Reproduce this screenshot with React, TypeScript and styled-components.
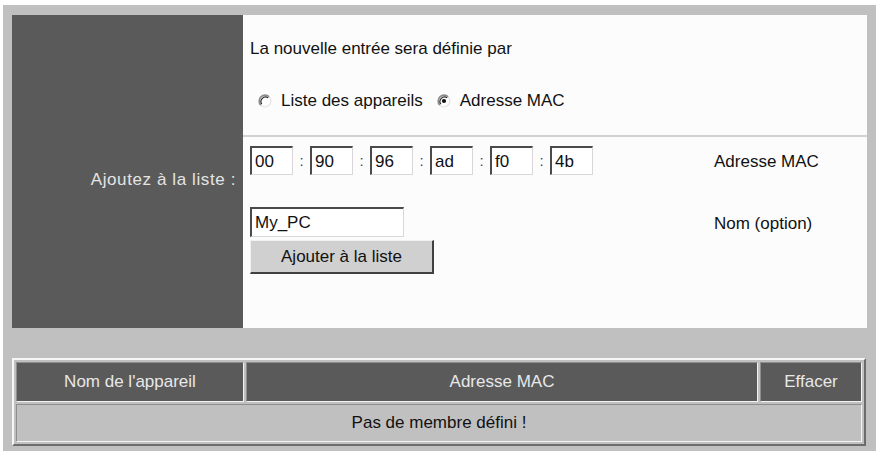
import React from "react";
import styled, { createGlobalStyle } from "styled-components";

const Global = createGlobalStyle`
  html, body { margin: 0; padding: 0; background: #ffffff; }
  body { font-family: "Liberation Sans", Arial, sans-serif; font-size: 17px; color: #111; }
`;

const Frame = styled.div`
  margin: 5px 0 0 3px;
  background: #c0c0c0;
  padding: 10px 9px 5px 9px;
  box-sizing: border-box;
  display: flex;
  flex-direction: column;
`;

const TopPanel = styled.div`
  display: grid;
  grid-template-columns: 231px 1fr;
  height: 313px;
  flex-shrink: 0;
`;

const LabelCell = styled.div`
  background: #5a5a5a;
  color: #e4e4e4;
  display: flex;
  align-items: center;
  justify-content: flex-end;
  padding: 17px 7px 0 0;
  box-sizing: border-box;
  letter-spacing: 0.6px;
  white-space: nowrap;
`;

const ContentCell = styled.div`
  background: #fcfcfc;
  display: flex;
  flex-direction: column;
`;

const ModeSection = styled.div`
  height: 122px;
  box-sizing: border-box;
  padding: 24px 0 0 7px;
  border-bottom: 2px solid #d2d2d2;
`;

const Line = styled.div`
  height: 20px;
  line-height: 20px;
  white-space: nowrap;
`;

const RadioRow = styled.div`
  margin-top: 32px;
  height: 20px;
  display: flex;
  align-items: center;
  padding-left: 8px;
  white-space: nowrap;
`;

const RadioLabel = styled.span<{ $last?: boolean }>`
  margin-left: 9px;
  margin-right: ${(p) => (p.$last ? "0" : "14px")};
`;

const EntrySection = styled.div`
  flex: 1;
  display: flex;
  flex-direction: column;
  padding: 9px 0 0 7px;
`;

const EntryRow = styled.div<{ $top: number; $h: number }>`
  display: grid;
  grid-template-columns: 464px 1fr;
  align-items: center;
  height: ${(p) => p.$h}px;
  margin-top: ${(p) => p.$top}px;
`;

const MacGroup = styled.div`
  display: flex;
  align-items: center;
`;

const Field = styled.input<{ $w: number; $h: number }>`
  width: ${(p) => p.$w}px;
  height: ${(p) => p.$h}px;
  box-sizing: border-box;
  margin: 0;
  padding: 1px 0 0 3px;
  font-family: "Liberation Sans", Arial, sans-serif;
  font-size: 17px;
  color: #111;
  background: #ffffff;
  border-style: solid;
  border-width: 2px 1px 1px 2px;
  border-color: #4a4a4a #d8d8d8 #d8d8d8 #4a4a4a;
  outline: none;
`;

const Colon = styled.span`
  width: 17px;
  text-align: center;
  font-size: 15px;
  color: #444;
`;

const SideLabel = styled.div<{ $shift?: number }>`
  white-space: nowrap;
  position: relative;
  top: ${(p) => p.$shift ?? 0}px;
`;

const Button = styled.button`
  width: 184px;
  height: 34px;
  margin: 0;
  padding: 0;
  font-family: "Liberation Sans", Arial, sans-serif;
  font-size: 17px;
  color: #111;
  background: #d0d0d0;
  border-style: solid;
  border-width: 1px 2px 2px 1px;
  border-color: #f0f0f0 #404040 #404040 #f0f0f0;
`;

const Spacer = styled.div`
  height: 30px;
  flex-shrink: 0;
`;

const ListTable = styled.table`
  width: 854px;
  table-layout: fixed;
  border-collapse: separate;
  border-spacing: 2px;
  border-style: solid;
  border-width: 2px;
  border-color: #f6f6f6 #6c6c6c #6c6c6c #f6f6f6;
  font-size: 17px;
`;

const HeadCell = styled.th`
  height: 40px;
  padding: 0;
  box-sizing: border-box;
  background: #5a5a5a;
  color: #e8e8e8;
  font-weight: normal;
  text-align: center;
  border: 1px solid;
  border-color: #8e8e8e #f2f2f2 #f2f2f2 #8e8e8e;
`;

const BodyCell = styled.td`
  height: 38px;
  padding: 0;
  box-sizing: border-box;
  background: #c0c0c0;
  color: #111;
  text-align: center;
  border: 1px solid;
  border-color: #8e8e8e #f2f2f2 #f2f2f2 #8e8e8e;
`;

const Radio = ({ checked }: { checked?: boolean }) => (
  <svg width="14" height="14" viewBox="0 0 14 14">
    <circle cx="7" cy="7" r="6" fill="#ffffff" />
    <path d="M2.76 11.24 A6 6 0 0 1 11.24 2.76" fill="none" stroke="#8c8c8c" strokeWidth="1.6" />
    <path d="M3.8 10.2 A4.6 4.6 0 0 1 10.2 3.8" fill="none" stroke="#2e2e2e" strokeWidth="1.2" />
    <path d="M11.24 2.76 A6 6 0 0 1 2.76 11.24" fill="none" stroke="#e6e6e6" strokeWidth="1.4" />
    {checked && <circle cx="7" cy="7" r="2.1" fill="#111" />}
  </svg>
);

const mac = ["00", "90", "96", "ad", "f0", "4b"];

export default function App() {
  return (
    <>
      <Global />
      <Frame>
        <TopPanel>
          <LabelCell>Ajoutez à la liste :</LabelCell>
          <ContentCell>
            <ModeSection>
              <Line>La nouvelle entrée sera définie par</Line>
              <RadioRow>
                <Radio />
                <RadioLabel>Liste des appareils</RadioLabel>
                <Radio checked />
                <RadioLabel $last>Adresse MAC</RadioLabel>
              </RadioRow>
            </ModeSection>
            <EntrySection>
              <EntryRow $top={0} $h={29}>
                <MacGroup>
                  {mac.map((v, i) => (
                    <React.Fragment key={i}>
                      {i > 0 && <Colon>:</Colon>}
                      <Field $w={43} $h={29} defaultValue={v} />
                    </React.Fragment>
                  ))}
                </MacGroup>
                <SideLabel $shift={1}>Adresse MAC</SideLabel>
              </EntryRow>
              <EntryRow $top={32} $h={30}>
                <div>
                  <Field $w={154} $h={30} defaultValue="My_PC" />
                </div>
                <SideLabel $shift={2}>Nom (option)</SideLabel>
              </EntryRow>
              <EntryRow $top={3} $h={34}>
                <div>
                  <Button>Ajouter à la liste</Button>
                </div>
                <div />
              </EntryRow>
            </EntrySection>
          </ContentCell>
        </TopPanel>
        <Spacer />
        <ListTable>
          <colgroup>
            <col style={{ width: 228 }} />
            <col style={{ width: 512 }} />
            <col style={{ width: 102 }} />
          </colgroup>
          <thead>
            <tr>
              <HeadCell>Nom de l'appareil</HeadCell>
              <HeadCell>Adresse MAC</HeadCell>
              <HeadCell>Effacer</HeadCell>
            </tr>
          </thead>
          <tbody>
            <tr>
              <BodyCell colSpan={3}>Pas de membre défini !</BodyCell>
            </tr>
          </tbody>
        </ListTable>
      </Frame>
    </>
  );
}
